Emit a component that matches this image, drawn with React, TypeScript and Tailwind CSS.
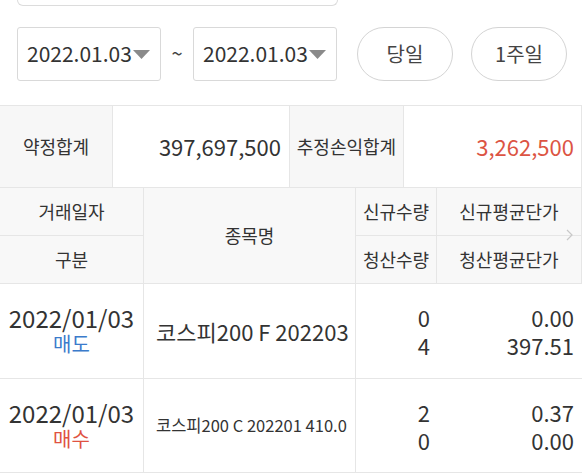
import React from 'react';

interface TradeRow {
  date: string;
  side: '매도' | '매수';
  name: string;
  small?: boolean;
  newQty: string;
  closeQty: string;
  newPrice: string;
  closePrice: string;
}

const rows: TradeRow[] = [
  { date: '2022/01/03', side: '매도', name: '코스피200 F 202203', newQty: '0', closeQty: '4', newPrice: '0.00', closePrice: '397.51' },
  { date: '2022/01/03', side: '매수', name: '코스피200 C 202201 410.0', small: true, newQty: '2', closeQty: '0', newPrice: '0.37', closePrice: '0.00' },
];

function DateSelect({ value }: { value: string }) {
  return (
    <div className="flex h-[54px] w-[144px] items-center justify-between rounded-[3px] border border-[#d9d9d9] bg-white pl-[9px] pr-[10px]">
      <span className="text-[21px] text-[#333]">{value}</span>
      <svg width="17" height="9" viewBox="0 0 17 9">
        <path d="M0 0h17L8.5 9z" fill="#8a8a8a" />
      </svg>
    </div>
  );
}

function PillButton({ label }: { label: string }) {
  return (
    <button className="flex h-[54px] w-[96px] items-center justify-center rounded-full border border-[#d4d4d4] bg-white text-[20px] text-[#444]">
      {label}
    </button>
  );
}

export default function App() {
  return (
    <div className="h-[474px] w-[584px] overflow-hidden bg-white font-['Noto_Sans_CJK_KR',sans-serif] text-[#333]">
      {/* search box cut off above */}
      <div className="ml-[17px] h-[6px] w-[321px] rounded-b-[6px] border-x border-b border-[#dcdcdc]" />

      {/* period filter */}
      <div className="mt-[21px] flex items-center pl-[17px]">
        <DateSelect value="2022.01.03" />
        <span className="w-[32px] pb-[3px] text-center text-[20px] text-[#444]">~</span>
        <DateSelect value="2022.01.03" />
        <div className="ml-[20px] flex gap-[18px]">
          <PillButton label="당일" />
          <PillButton label="1주일" />
        </div>
      </div>

      {/* totals */}
      <div className="mt-[24px] grid w-[582px] grid-cols-[113px_177px_114px_178px] border-t border-[#e6e6e6] text-[18px]">
        <div className="flex h-[82px] items-center justify-center border-b border-r border-[#e6e6e6] bg-[#f7f7f7]">약정합계</div>
        <div className="flex h-[82px] items-center justify-end border-b border-r border-[#e6e6e6] pr-[8px] text-[22px]">397,697,500</div>
        <div className="flex h-[82px] items-center justify-center border-b border-r border-[#e6e6e6] bg-[#f7f7f7]">추정손익합계</div>
        <div className="flex h-[82px] items-center justify-end border-b border-r border-[#e6e6e6] pr-[7px] text-[22px] text-[#dc5443]">3,262,500</div>
      </div>

      {/* list header */}
      <div className="relative grid w-[582px] grid-cols-[144px_212px_81px_145px] grid-rows-[48px_48px] bg-[#f8f8f8] text-[18px]">
        <div className="flex items-center justify-center border-b border-r border-[#e6e6e6]">거래일자</div>
        <div className="row-span-2 flex items-center justify-center border-b border-r border-[#e6e6e6]">종목명</div>
        <div className="flex items-center justify-center border-b border-r border-[#e6e6e6]">신규수량</div>
        <div className="flex items-center justify-center border-b border-r border-[#e6e6e6]">신규평균단가</div>
        <div className="flex items-center justify-center border-b border-r border-[#e6e6e6]">구분</div>
        <div className="flex items-center justify-center border-b border-r border-[#e6e6e6]">청산수량</div>
        <div className="flex items-center justify-center border-b border-r border-[#e6e6e6]">청산평균단가</div>
        <svg className="absolute left-[566px] top-[41px]" width="7" height="12" viewBox="0 0 7 12">
          <path d="M1 1l5 5-5 5" fill="none" stroke="#c8c8c8" strokeWidth="1.2" />
        </svg>
      </div>

      {/* trade rows */}
      {rows.map((r, i) => (
        <div
          key={i}
          className={`grid w-[582px] grid-cols-[144px_212px_81px_145px] border-b border-[#e6e6e6] ${i === 0 ? 'h-[95px]' : 'h-[94px]'}`}
        >
          <div className="flex flex-col items-center justify-center border-r border-[#e6e6e6] leading-[26px]">
            <span className="text-[24px]">{r.date}</span>
            <span className={`text-[20px] ${r.side === '매도' ? 'text-[#3b7bcb]' : 'text-[#e05241]'}`}>{r.side}</span>
          </div>
          <div className={`flex items-center border-r border-[#e6e6e6] pl-[12px] ${r.small ? 'text-[16.5px]' : 'text-[22px]'}`}>
            {r.name}
          </div>
          <div className="flex flex-col items-end justify-center pr-[7px] text-[22px] leading-[28px]">
            <span>{r.newQty}</span>
            <span>{r.closeQty}</span>
          </div>
          <div className="flex flex-col items-end justify-center pr-[8px] text-[22px] leading-[28px]">
            <span>{r.newPrice}</span>
            <span>{r.closePrice}</span>
          </div>
        </div>
      ))}
    </div>
  );
}
